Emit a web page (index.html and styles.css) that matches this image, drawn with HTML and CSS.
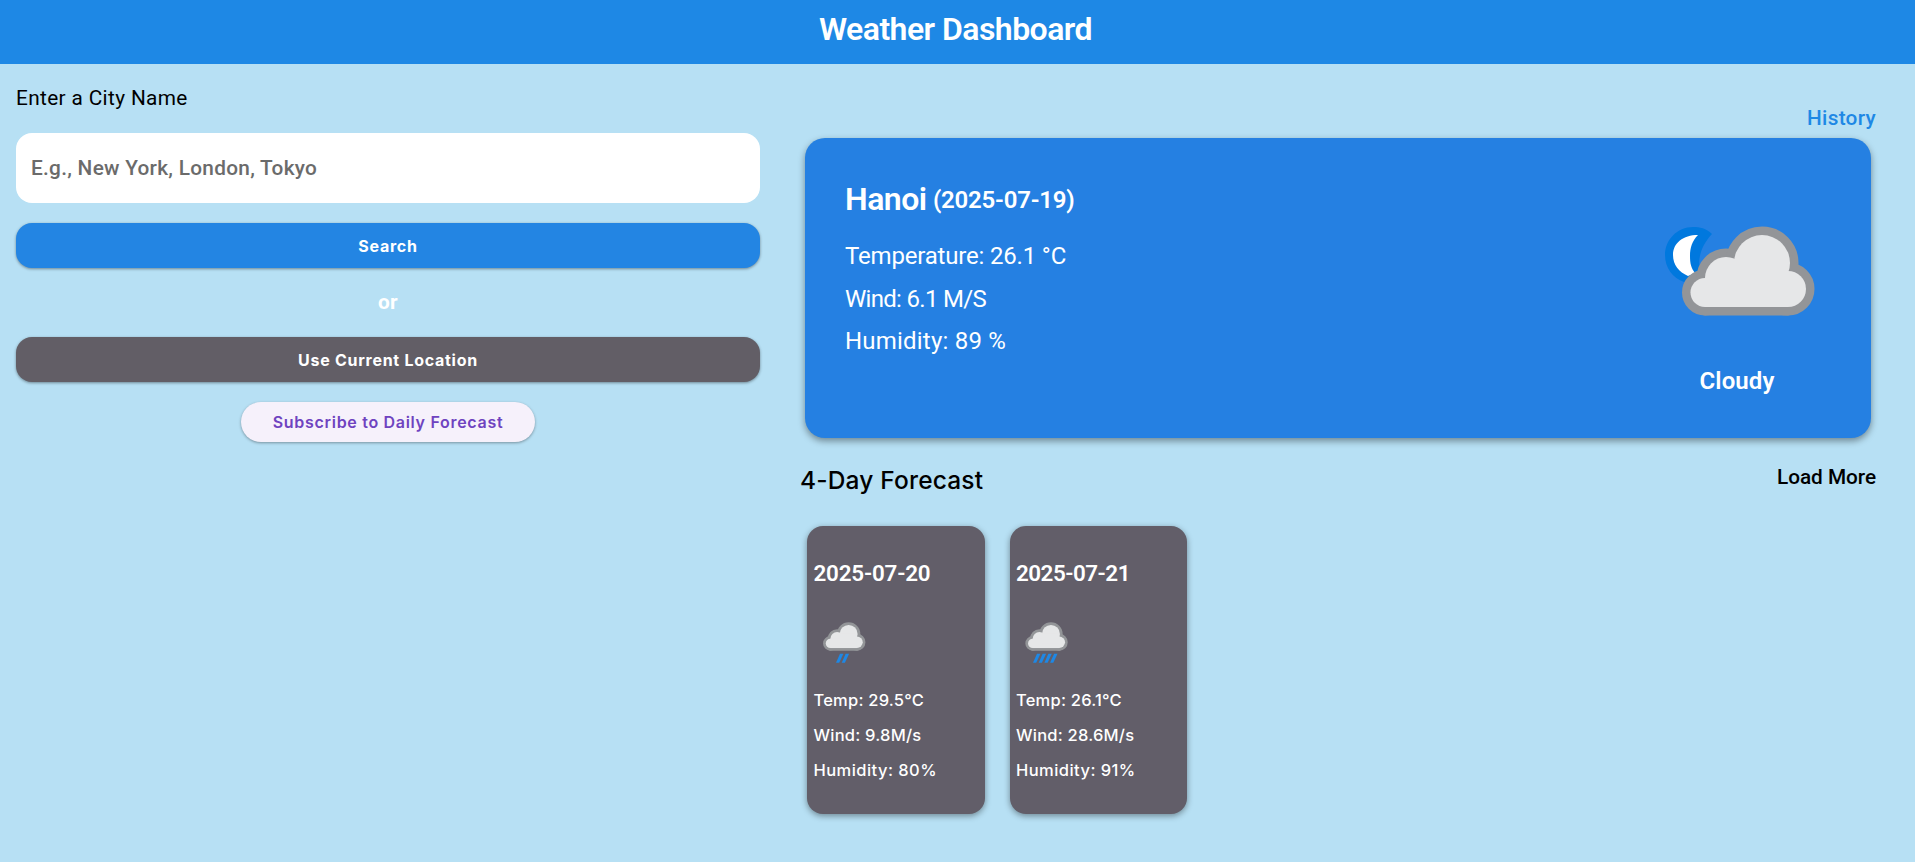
FILE: index.html
```html
<!DOCTYPE html>
<html lang="en">
<head>
<meta charset="utf-8">
<title>Weather Dashboard</title>
<link rel="stylesheet" href="styles.css">
</head>
<body>
<svg class="defs" width="0" height="0" aria-hidden="true">
  <defs>
    <g id="cloud">
      <circle cx="55" cy="82.5" r="14.5"/>
      <circle cx="76" cy="68" r="21"/>
      <circle cx="112" cy="53" r="28"/>
      <circle cx="138" cy="79" r="18"/>
      <rect x="55" y="68" width="83" height="29"/>
      <rect x="84" y="53" width="54" height="30"/>
    </g>
    <path id="drop" d="M4 0h3.4L3.2 9H0z"/>
  </defs>
</svg>
<header class="header"><h1 class="title">Weather Dashboard</h1></header>
<main class="main">
  <section class="search-panel">
    <label class="label" for="city">Enter a City Name</label>
    <input class="city-input" id="city" placeholder="E.g., New York, London, Tokyo">
    <button class="btn btn-search">Search</button>
    <p class="or">or</p>
    <button class="btn btn-location">Use Current Location</button>
    <button class="subscribe">Subscribe to Daily Forecast</button>
  </section>
  <section class="weather-panel">
    <a class="history">History</a>
    <article class="current">
      <div class="details">
        <h2 class="place"><span class="city">Hanoi</span> <span class="date">(2025-07-19)</span></h2>
        <p class="detail temperature">Temperature: 26.1 °C</p>
        <p class="detail wind">Wind: 6.1 M/S</p>
        <p class="detail humidity">Humidity: 89 %</p>
      </div>
      <div class="condition">
        <svg class="condition-icon" width="180" height="120" viewBox="0 0 180 120">
          <path fill="#0078de" d="M62 24C56 18 50 17 43 17C27 17 15 30 15 45C15 58 23 68 34 72L50 60C48 52 49 38 62 24Z"/>
          <path fill="#fff" d="M48 25C42 31 40 38 40 46C40 53 41 58 45 63L38 66C29 62 23 55 23 45C23 33 33 25 48 25Z"/>
          <use href="#cloud" class="cloud-edge"/>
          <use href="#cloud" class="cloud-body"/>
        </svg>
        <p class="condition-name">Cloudy</p>
      </div>
    </article>
    <div class="forecast-head">
      <h2 class="forecast-title">4-Day Forecast</h2>
      <a class="load-more">Load More</a>
    </div>
    <div class="forecast">
      <article class="day">
        <h3 class="day-date">2025-07-20</h3>
        <svg class="day-icon" width="60" height="50" viewBox="0 0 60 50">
          <g transform="translate(-1.2 0) scale(.32)">
            <use href="#cloud" class="cloud-edge"/>
            <use href="#cloud" class="cloud-body"/>
          </g>
          <g class="rain"><use href="#drop" x="22" y="36.7"/><use href="#drop" x="27.7" y="36.7"/></g>
        </svg>
        <p class="stat">Temp: 29.5°C</p>
        <p class="stat">Wind: 9.8M/s</p>
        <p class="stat stat-humidity">Humidity: 80%</p>
      </article>
      <article class="day">
        <h3 class="day-date day-date-narrow">2025-07-21</h3>
        <svg class="day-icon" width="60" height="50" viewBox="0 0 60 50">
          <g transform="translate(-.9 0) scale(.32)">
            <use href="#cloud" class="cloud-edge"/>
            <use href="#cloud" class="cloud-body"/>
          </g>
          <g class="rain"><use href="#drop" x="17" y="36.7"/><use href="#drop" x="22.7" y="36.7"/><use href="#drop" x="28.4" y="36.7"/><use href="#drop" x="34.1" y="36.7"/></g>
        </svg>
        <p class="stat stat-narrow">Temp: 26.1°C</p>
        <p class="stat">Wind: 28.6M/s</p>
        <p class="stat stat-humidity">Humidity: 91%</p>
      </article>
    </div>
  </section>
</main>
</body>
</html>
```
FILE: styles.css
```css
*{box-sizing:border-box}
body{margin:0;min-height:862px;background:#b7e0f4;font-family:Roboto,sans-serif;color:#000}
h1,h2,h3,p{margin:0}
.defs{position:absolute}
.cloud-edge{fill:#939598;stroke:#939598;stroke-width:17;stroke-linejoin:round}
.cloud-body{fill:#e6e7e8}
.rain{fill:#1e88e5}
.header{height:64px;padding:10px 4px 0 0;background:#1e88e5;text-align:center}
.title{font-size:32px;line-height:38px;font-weight:600;letter-spacing:-.54px;color:#fff}
.main{display:flex;padding:0 40px 0 16px;gap:40px}
.search-panel{width:744px;padding-top:22px;display:flex;flex-direction:column}
.label{font-size:20.8px;line-height:24px;letter-spacing:.36px}
.city-input{height:70px;margin:23px 0 20px;padding:0 15px;border:0;border-radius:16px;background:#fff;font:500 20.8px/24px Roboto,sans-serif;letter-spacing:.28px}
.city-input::placeholder{color:#6b6b6b}
.btn{height:45px;padding:1px 0 0;border:0;border-radius:16px;color:#fff;font:700 16px/20px Inter,sans-serif;letter-spacing:.72px;box-shadow:0 1px 3px rgba(0,0,0,.4)}
.btn-search{background:#2385e3}
.btn-location{background:#625e66}
.or{margin:22px 0 22.5px;text-align:center;font-size:20.8px;line-height:24px;font-weight:700;letter-spacing:.4px;color:#fff}
.subscribe{align-self:center;width:294px;height:40px;margin-top:20px;border:0;border-radius:20px;background:#f6f1fb;color:#6f43c0;font:600 16px/20px Inter,sans-serif;letter-spacing:.7px;box-shadow:0 1px 3px rgba(0,0,0,.35)}
.weather-panel{width:1075px;padding-top:42px;display:flex;flex-direction:column}
.history{align-self:flex-end;color:#1e88e5;font-size:20.8px;line-height:24px;font-weight:500;letter-spacing:.29px;margin-right:-1px}
.current{height:300px;margin:7.5px 4px 0 5px;padding:42.5px 40px 0;display:flex;justify-content:space-between;border-radius:20px;background:#2580e2;color:#fff;box-shadow:0 3px 7px rgba(0,0,0,.4)}
.place{height:38px;font-size:32px;line-height:38px;font-weight:600;letter-spacing:-.53px;white-space:nowrap}
.date{font-size:24px;letter-spacing:-.21px;vertical-align:2px;margin-left:-1px}
.detail{font-size:24px;line-height:28px;margin-top:14.5px}
.temperature{margin-top:24px;letter-spacing:-.18px}
.wind{letter-spacing:-.7px}
.humidity{letter-spacing:.21px}
.condition{width:180px;margin:30px 1px 0 0}
.condition-icon{display:block}
.condition-name{margin-top:37px;padding-right:6px;text-align:center;font-size:24px;line-height:28px;font-weight:600;letter-spacing:.1px}
.forecast-head{display:flex;justify-content:space-between;margin-top:27.5px}
.forecast-title{font:500 24.5px/31px Inter,sans-serif;letter-spacing:.17px}
.load-more{font-size:20.8px;line-height:24px;font-weight:500;letter-spacing:-.05px;margin-right:-1px}
.forecast{display:flex;gap:25px;margin:30px 0 0 7px}
.day{width:177.5px;height:287.5px;padding:33.5px 6px 0 6.5px;border-radius:16px;background:#625e69;color:#fff;box-shadow:0 2px 6px rgba(0,0,0,.4)}
.day-date{font-size:22.4px;line-height:26px;font-weight:600;letter-spacing:-.18px}
.day-date-narrow{letter-spacing:-.48px}
.day-icon{display:block;margin:31px 0 23px}
.stat{font:500 16.5px/20px Inter,sans-serif;margin-top:15px;letter-spacing:.22px}
.stat-humidity{letter-spacing:.45px}
```
